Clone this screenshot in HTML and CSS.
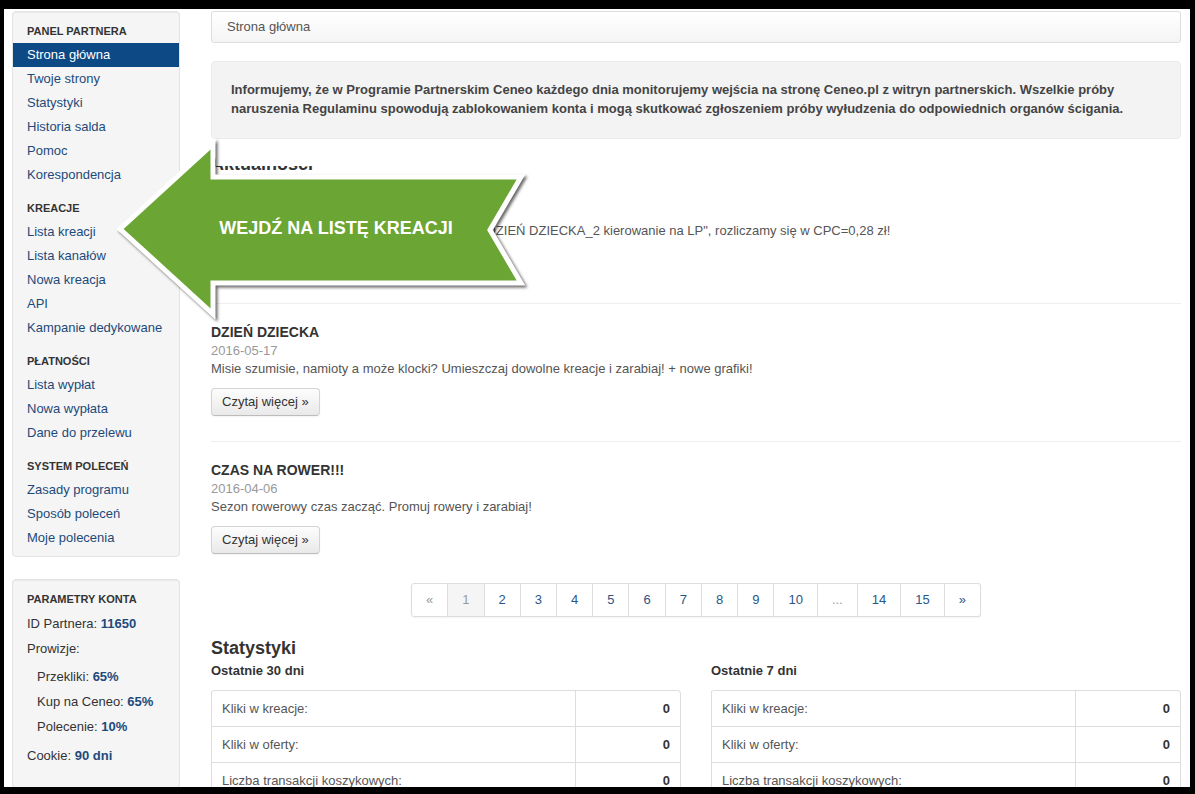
FILE: index.html
```html
<!DOCTYPE html>
<html lang="pl">
<head>
  <meta charset="UTF-8">
  <meta name="viewport" content="width=device-width, initial-scale=1.0">
  <title>Panel Partnera - Strona główna</title>
  <link rel="stylesheet" href="styles.css">
</head>
<body>
  <div class="screen">
    <aside class="sidebar">
      <div class="well nav-panel">
        <ul class="nav-list">
          <li class="nav-header">Panel partnera</li>
          <li class="active"><a href="#">Strona główna</a></li>
          <li><a href="#">Twoje strony</a></li>
          <li><a href="#">Statystyki</a></li>
          <li><a href="#">Historia salda</a></li>
          <li><a href="#">Pomoc</a></li>
          <li><a href="#">Korespondencja</a></li>
          <li class="nav-header">Kreacje</li>
          <li><a href="#">Lista kreacji</a></li>
          <li><a href="#">Lista kanałów</a></li>
          <li><a href="#">Nowa kreacja</a></li>
          <li><a href="#">API</a></li>
          <li><a href="#">Kampanie dedykowane</a></li>
          <li class="nav-header">Płatności</li>
          <li><a href="#">Lista wypłat</a></li>
          <li><a href="#">Nowa wypłata</a></li>
          <li><a href="#">Dane do przelewu</a></li>
          <li class="nav-header">System poleceń</li>
          <li><a href="#">Zasady programu</a></li>
          <li><a href="#">Sposób poleceń</a></li>
          <li><a href="#">Moje polecenia</a></li>
        </ul>
      </div>

      <div class="well params">
        <ul class="nav-list">
          <li class="nav-header">Parametry konta</li>
          <li class="param">ID Partnera: <b>11650</b></li>
          <li class="param">Prowizje:
            <ul class="sub-params">
              <li>Przekliki: <b>65%</b></li>
              <li>Kup na Ceneo: <b>65%</b></li>
              <li>Polecenie: <b>10%</b></li>
            </ul>
          </li>
          <li class="param">Cookie: <b>90 dni</b></li>
        </ul>
      </div>
    </aside>

    <main class="content">
      <div class="breadcrumb">Strona główna</div>

      <div class="notice">
        Informujemy, że w Programie Partnerskim Ceneo każdego dnia monitorujemy wejścia na stronę Ceneo.pl z witryn partnerskich. Wszelkie próby
        naruszenia Regulaminu spowodują zablokowaniem konta i mogą skutkować zgłoszeniem próby wyłudzenia do odpowiednich organów ścigania.
      </div>

      <h3 class="news-heading">Aktualności</h3>

      <div class="news-item">
        <h4>DZIEŃ DZIECKA_2</h4>
        <p class="date">2016-05-24</p>
        <p class="lead">Wystartowała nowa kampania dedykowana pt. "DZIEŃ DZIECKA_2 kierowanie na LP", rozliczamy się w CPC=0,28 zł!</p>
        <a class="btn" href="#">Czytaj więcej »</a>
      </div>
      <hr>
      <div class="news-item">
        <h4>DZIEŃ DZIECKA</h4>
        <p class="date">2016-05-17</p>
        <p class="lead">Misie szumisie, namioty a może klocki? Umieszczaj dowolne kreacje i zarabiaj! + nowe grafiki!</p>
        <a class="btn" href="#">Czytaj więcej »</a>
      </div>
      <hr>
      <div class="news-item">
        <h4>CZAS NA ROWER!!!</h4>
        <p class="date">2016-04-06</p>
        <p class="lead">Sezon rowerowy czas zacząć. Promuj rowery i zarabiaj!</p>
        <a class="btn" href="#">Czytaj więcej »</a>
      </div>

      <div class="pagination">
        <ul>
          <li class="disabled"><a href="#">«</a></li>
          <li class="active"><a href="#">1</a></li>
          <li><a href="#">2</a></li>
          <li><a href="#">3</a></li>
          <li><a href="#">4</a></li>
          <li><a href="#">5</a></li>
          <li><a href="#">6</a></li>
          <li><a href="#">7</a></li>
          <li><a href="#">8</a></li>
          <li><a href="#">9</a></li>
          <li><a href="#">10</a></li>
          <li class="disabled"><a href="#">...</a></li>
          <li><a href="#">14</a></li>
          <li><a href="#">15</a></li>
          <li><a href="#">»</a></li>
        </ul>
      </div>

      <h3 class="stats-heading">Statystyki</h3>
      <div class="stats-grid">
        <div class="stats-col">
          <h5>Ostatnie 30 dni</h5>
          <table class="stats-table">
            <tr><td>Kliki w kreacje:</td><td class="num">0</td></tr>
            <tr><td>Kliki w oferty:</td><td class="num">0</td></tr>
            <tr><td>Liczba transakcji koszykowych:</td><td class="num">0</td></tr>
            <tr><td>Wartość transakcji:</td><td class="num">0</td></tr>
          </table>
        </div>
        <div class="stats-col">
          <h5>Ostatnie 7 dni</h5>
          <table class="stats-table">
            <tr><td>Kliki w kreacje:</td><td class="num">0</td></tr>
            <tr><td>Kliki w oferty:</td><td class="num">0</td></tr>
            <tr><td>Liczba transakcji koszykowych:</td><td class="num">0</td></tr>
            <tr><td>Wartość transakcji:</td><td class="num">0</td></tr>
          </table>
        </div>
      </div>
    </main>

    <!-- callout pointing at "Lista kreacji"; viewBox uses page coordinates -->
    <svg class="callout" width="440" height="200" viewBox="100 130 440 200">
      <rect x="216" y="141" width="320" height="25" fill="#fff"/>
      <g class="callout-arrow">
        <path d="M120 229 L213 144 L213 177 L521 177 L490 230 L521 283 L213 283 L213 314 Z"
              fill="#6ba534" stroke="#fff" stroke-width="5" stroke-linejoin="miter"/>
      </g>
      <text class="callout-text" x="336" y="234" text-anchor="middle">WEJDŹ NA LISTĘ KREACJI</text>
    </svg>
  </div>
</body>
</html>
```

FILE: styles.css
```css
html, body {
  margin: 0;
  height: 794px;
  overflow: hidden;
  background: #000;
}
body {
  font-family: "Liberation Sans", Arial, sans-serif;
  font-size: 13px;
  line-height: 18px;
  color: #333;
}
a {
  text-decoration: none;
}

.screen {
  position: relative;
  display: flex;
  gap: 31px;
  box-sizing: border-box;
  width: 1186px;
  height: 778px;
  margin: 9px 0 0 4px;
  padding: 2px 9px 0 8px;
  background: #fff;
  overflow: hidden;
}

/* sidebar */
.sidebar {
  width: 168px;
  flex: none;
}
.well {
  background-color: #f5f5f5;
  border: 1px solid #e3e3e3;
  border-radius: 4px;
  box-shadow: inset 0 1px 1px rgba(0, 0, 0, 0.05);
  padding: 8px 0 6px;
  margin-bottom: 22px;
}
.nav-list {
  list-style: none;
  margin: 0;
  padding: 0;
}
.nav-header {
  padding: 3px 14px;
  line-height: 17px;
  font-size: 11px;
  font-weight: bold;
  text-transform: uppercase;
  color: #333;
  text-shadow: 0 1px 0 rgba(255, 255, 255, 0.5);
}
.nav-list li + .nav-header {
  margin-top: 10px;
}
.nav-list a {
  display: block;
  padding: 3px 14px;
  color: #1d4a7a;
}
.nav-list .active a {
  background-color: #0d4a85;
  color: #fff;
}
.params {
  padding-bottom: 20px;
}
.param {
  padding: 4px 14px 3px;
  color: #333;
}
.param b,
.sub-params b {
  color: #1d4a7a;
}
.sub-params {
  list-style: none;
  margin: 7px 0 0;
  padding: 0 0 0 10px;
}
.sub-params li {
  padding: 3px 0 4px;
}

/* main column */
.content {
  width: 970px;
  flex: none;
}
.breadcrumb {
  height: 30px;
  line-height: 30px;
  padding: 0 15px;
  border: 1px solid #ddd;
  border-radius: 3px;
  background: linear-gradient(#fff, #f5f5f5);
  box-shadow: inset 0 1px 0 #fff;
  color: #555;
  margin-bottom: 18px;
}
.notice {
  padding: 18px 19px 20px;
  line-height: 19px;
  background: #f3f3f3;
  border: 1px solid #ececec;
  border-radius: 4px;
  font-weight: bold;
  color: #444;
}
.news-heading,
.stats-heading {
  font-size: 18px;
  line-height: 27px;
  font-weight: bold;
  color: #333;
  margin: 12px 0 7px;
}
.news-item h4 {
  margin: 0;
  font-size: 14px;
  line-height: 19px;
  font-weight: bold;
  color: #333;
}
.news-item p {
  margin: 0;
}
.news-item .date {
  color: #999;
}
.news-item .lead {
  color: #555;
  margin-bottom: 10px;
}
.btn {
  display: inline-block;
  padding: 4px 10px;
  line-height: 18px;
  color: #333;
  background: linear-gradient(#fdfdfd, #e9e9e9);
  border: 1px solid #d4d4d4;
  border-bottom-color: #bcbcbc;
  border-radius: 4px;
  box-shadow: inset 0 1px 0 rgba(255, 255, 255, 0.2), 0 1px 2px rgba(0, 0, 0, 0.05);
}
hr {
  margin: 25px 0 19px;
  border: 0;
  border-top: 1px solid #eee;
  height: 0;
}

/* pagination */
.pagination {
  margin-top: 29px;
  display: flex;
  justify-content: center;
}
.pagination ul {
  display: flex;
  list-style: none;
  margin: 0;
  padding: 0;
  border-radius: 3px;
  box-shadow: 0 1px 2px rgba(0, 0, 0, 0.05);
}
.pagination a {
  display: block;
  padding: 0 14px;
  line-height: 32px;
  border: 1px solid #ddd;
  border-left-width: 0;
  color: #2a5687;
}
.pagination li:first-child a {
  border-left-width: 1px;
  border-radius: 3px 0 0 3px;
}
.pagination li:last-child a {
  border-radius: 0 3px 3px 0;
}
.pagination .active a {
  background-color: #f5f5f5;
  color: #999;
}
.pagination .disabled a {
  color: #999;
}

/* stats */
.stats-heading {
  margin: 18px 0 0;
}
.stats-grid {
  display: grid;
  grid-template-columns: 470px 470px;
  gap: 30px;
}
.stats-col h5 {
  margin: 0 0 10px;
  font-size: 13px;
  line-height: 18px;
  font-weight: bold;
  color: #333;
}
.stats-table {
  width: 100%;
  border-collapse: separate;
  border-spacing: 0;
  border: 1px solid #ddd;
  border-left-width: 0;
  border-radius: 4px;
}
.stats-table td {
  padding: 9px 10px 8px;
  line-height: 18px;
  border-left: 1px solid #ddd;
  border-top: 1px solid #ddd;
  color: #555;
}
.stats-table tr:first-child td {
  border-top: 0;
}
.stats-table td.num {
  width: 84px;
  text-align: right;
  font-weight: bold;
  color: #333;
}

/* green callout */
.callout {
  position: absolute;
  left: 96px;
  top: 121px;
}
.callout-arrow {
  filter: drop-shadow(2px 2px 1.5px rgba(0, 0, 0, 0.6));
}
.callout-text {
  font-family: "Liberation Sans", Arial, sans-serif;
  font-size: 18px;
  font-weight: bold;
  fill: #fff;
}
```
